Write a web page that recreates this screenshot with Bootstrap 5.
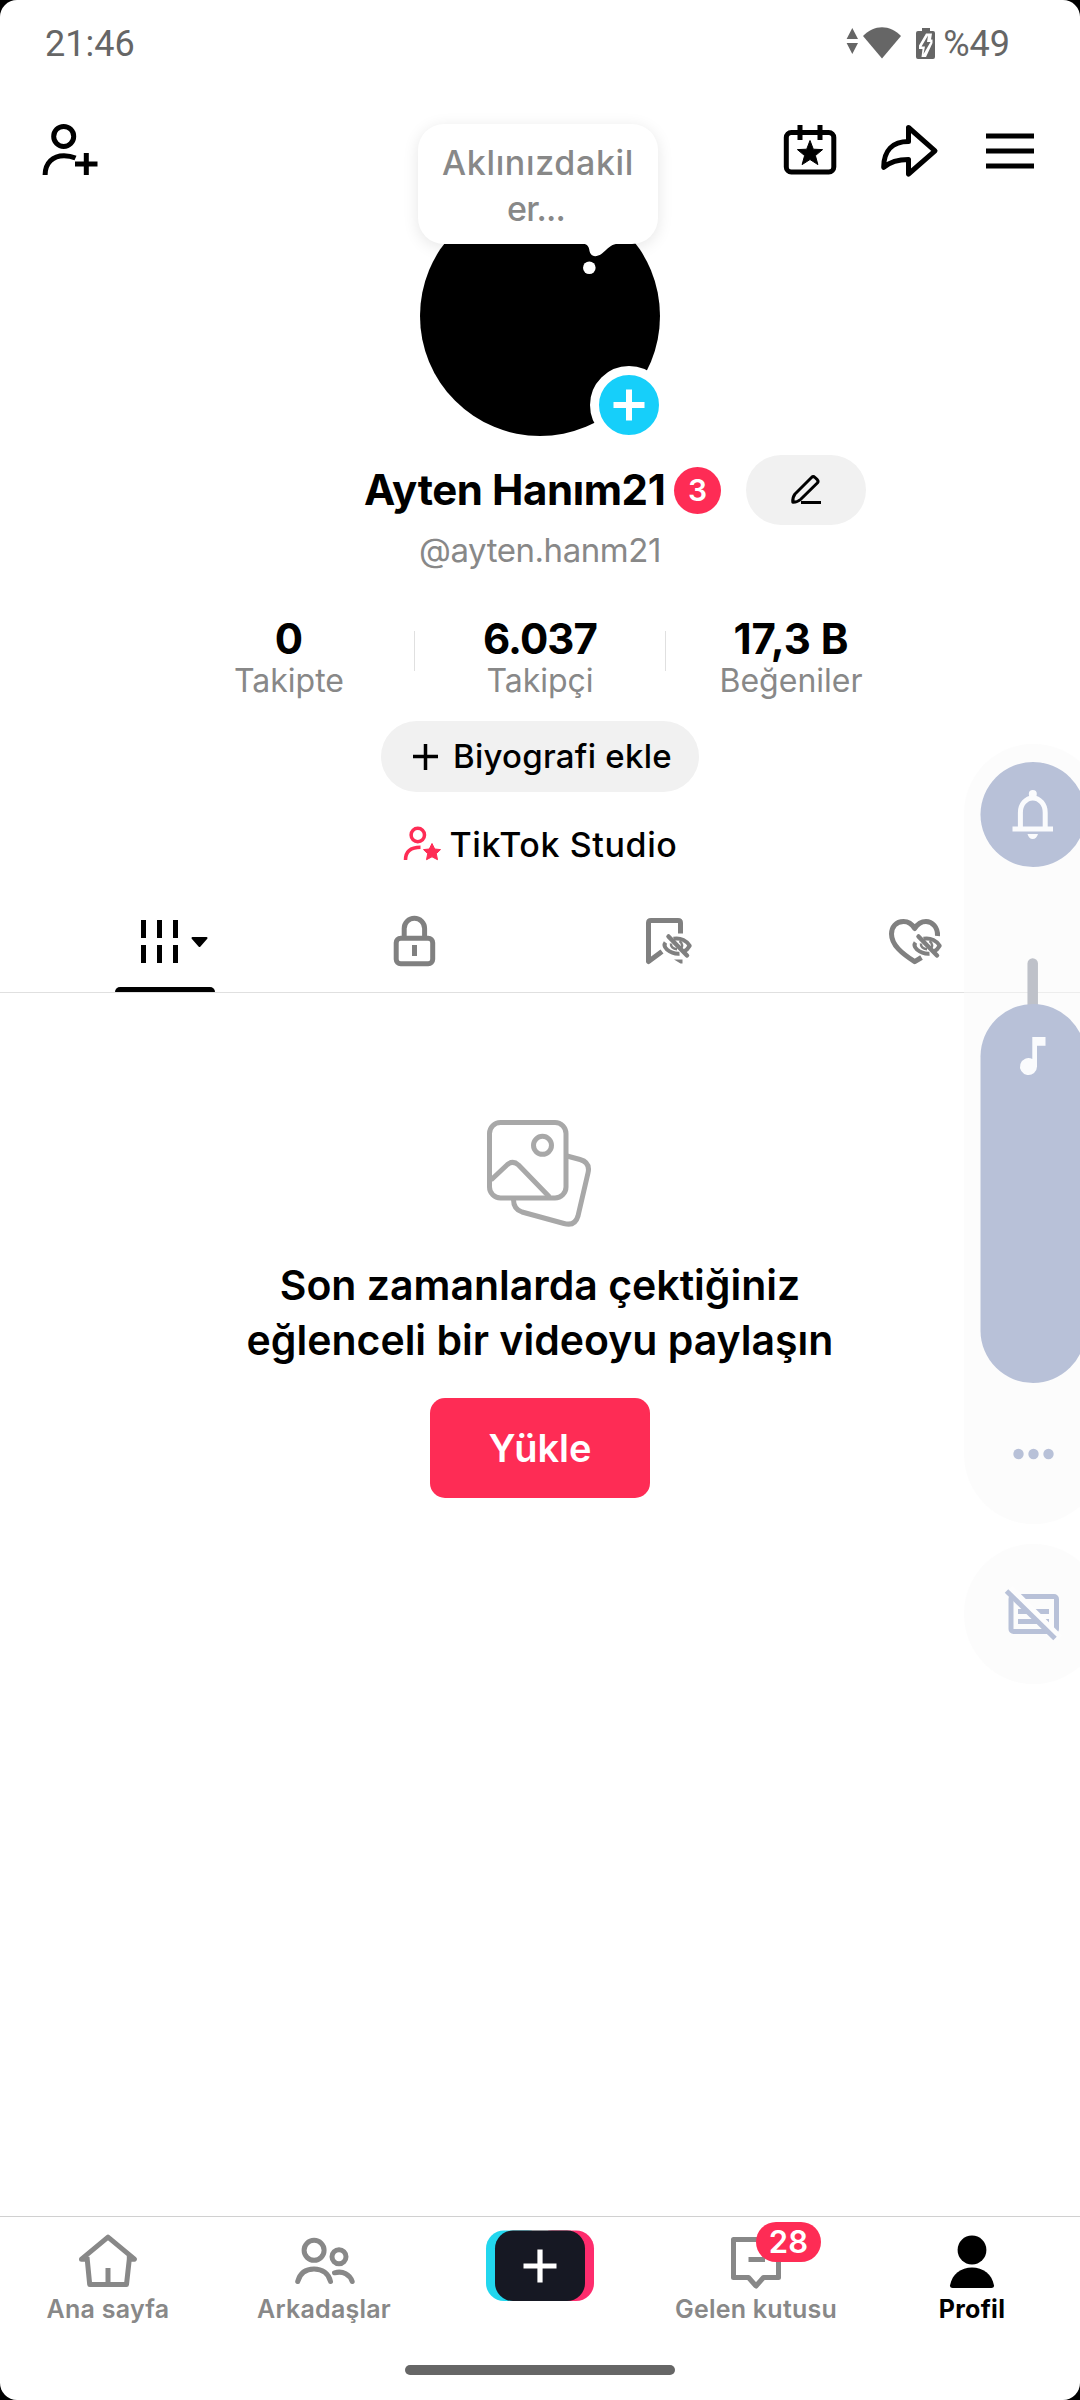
<!DOCTYPE html>
<html lang="tr">
<head>
<meta charset="utf-8">
<meta name="viewport" content="width=device-width, initial-scale=1">
<title>Profil</title>
<link href="https://cdn.jsdelivr.net/npm/bootstrap@5.3.0/dist/css/bootstrap.min.css" rel="stylesheet">
<style>
  body { background:#000; font-family:Inter,"Noto Sans",sans-serif; color:#000; overflow:hidden; }
  svg { display:block; flex:none; overflow:visible; }
  .phone { width:1080px; height:2400px; background:#fff; border-radius:17px; overflow:hidden; }
  .muted { color:#888; }
  .ln { fill:none; stroke:currentColor; stroke-width:5; stroke-linejoin:round; stroke-linecap:butt; }
  .status { height:88px; padding:1px 70px 0 45px; color:#666; font-family:Roboto,sans-serif; font-size:36px; line-height:87px; }
  .status-icons { margin-right:-3px; }
  .topbar { height:108px; padding:32px 42px 0 38px; }
  .avatar { width:240px; height:240px; background:#000; }
  .bubble { left:-2px; top:-72px; width:240px; height:120px; padding-top:16px; border-radius:26px; background:#fff; box-shadow:0 3px 16px rgba(0,0,0,.1); font-size:34px; line-height:46px; font-weight:500; letter-spacing:.65px; }
  .bubble .rest { letter-spacing:-.8px; margin-right:4px; }
  .avatar-mask { inset:0; }
  .add-badge { left:170px; top:170px; width:78px; height:78px; border:9px solid #fff; background:#16cffa; }
  .name-row { height:70px; margin-top:19px; margin-bottom:1px; padding-left:364px; }
  .name-text { font-size:42px; font-weight:700; line-height:70px; width:310px; letter-spacing:-.42px; }
  .count { width:47px; height:47px; background:#fe2c55; font-size:30px; line-height:47px; font-weight:600; }
  .edit { width:120px; height:70px; background:#f1f1f1; margin-left:25px; }
  .handle { font-size:33px; line-height:48px; letter-spacing:-.45px; }
  .stats { margin-top:40px; }
  .stat { width:250px; }
  .stat b { display:block; font-size:42px; line-height:50px; font-weight:700; }
  .stat b.tight { letter-spacing:-.95px; }
  .stat span.cap { display:block; font-size:32px; line-height:33px; }
  .sep { width:1px; height:40px; margin-top:17px; background:#e0e0e0; }
  .bio { width:318px; height:71px; margin-top:24px; background:#f1f1f1; font-size:33px; font-weight:500; padding-left:32px; gap:15px; letter-spacing:.25px; }
  .studio { height:40px; margin-top:32px; font-size:34px; font-weight:500; gap:9px; letter-spacing:.6px; }
  .tabs { height:129px; padding:46px 40px 0; border-bottom:1px solid #e0e0e0; color:#808080; }
  .tab-cell { width:250px; }
  .tab-mark { width:100px; height:5px; margin-top:17px; background:#000; border-radius:5px 5px 0 0; }
  .empty { margin-top:127px; }
  .empty-title { margin:30px 0 0; font-size:41px; line-height:55px; font-weight:600; }
  .upload { margin-top:30px; width:220px; height:100px; border-radius:15px; background:#fe2c55; color:#fff; font-size:38px; font-weight:600; line-height:98px; padding:0; border:0; }
  .dock { height:184px; border-top:1px solid #d0d0d0; }
  .dock-item { width:216px; padding-top:13px; color:#888; font-size:25px; line-height:34px; font-weight:600; letter-spacing:.25px; }
  .dock-item svg { margin-bottom:2px; }
  .inbox-count { left:108px; top:5px; width:65px; height:40px; border-radius:20px; background:#fe2c55; color:#fff; font-size:31px; line-height:40px; }
  .home-bar { width:270px; height:10px; margin:39px auto 0; border-radius:5px; background:#666; }
  .volume { top:744px; right:0; width:116px; overflow:hidden; color:#b8c1d8; }
  .vol-panel { width:139px; height:780px; border-radius:70px; background:rgba(250,250,250,.5); }
  .vol-foot { width:139px; height:140px; margin-top:20px; border-radius:70px; background:rgba(250,250,250,.5); }
</style>
</head>
<body>
<div class="phone d-flex flex-column position-relative">

  <div class="status d-flex justify-content-between">
    <span>21:46</span>
    <span class="d-flex align-items-center">
      <svg class="status-icons" width="100" height="40" viewBox="845 25 100 40" fill="currentColor">
        <path d="M851.3 28L857 39H845.6ZM845.6 43H857L851.3 54Z"/>
        <path d="M862 36C873 24.3 889 24.3 900 36L881 58.5Z"/>
        <path d="M921 28h8v3h3a2 2 0 0 1 2 2V57a2 2 0 0 1-2 2H917a2 2 0 0 1-2-2V33a2 2 0 0 1 2-2h4Z"/>
        <path d="M925 33.5L918 45.5V49H921.5L920.5 57H925L931.5 43V39.5H930L931 33.500Z" fill="#fff"/>
        <path d="M927 35.500L920.500 46.500H924L922.500 54L929.500 42H926Z"/>
      </svg>
      <span>%49</span>
    </span>
  </div>

  <div class="topbar d-flex justify-content-between">
    <svg width="64" height="60" viewBox="38 120 64 60" class="ln">
      <circle cx="63.7" cy="136.4" r="10"/>
      <path d="M45.1 175C45.100 163 53 155.700 64 155.700C68.500 155.700 72 156.500 75.500 158M75 164H97.500M86.300 153V175"/>
    </svg>
    <svg width="258" height="60" viewBox="780 120 258 60" class="ln">
      <rect x="786.3" y="132.500" width="47.500" height="39.500" rx="5"/>
      <path d="M800 125V140M820 125V140"/>
      <path fill="currentColor" stroke-width="1" style="stroke-width:1px" d="M810 140.500L813.300 149.200L822.600 149.600L815.400 155.600L817.900 164.600L810 159.500L802.100 164.600L804.600 155.600L797.400 149.600L806.700 149.200Z"/>
      <path d="M908.500 127.500L935 150.800L908.500 174V159.500C898 159.500 890 162 883.700 167.300C883.700 150 893 141.500 908.500 141.500Z"/>
      <path d="M986 136H1034M986 151H1034M986 166H1034"/>
    </svg>
  </div>

  <div class="avatar rounded-circle position-relative align-self-center">
    <div class="bubble position-absolute text-center muted"><span>Aklınızdakil</span><br><span class="rest">er...</span></div>
    <svg class="avatar-mask position-absolute" width="240" height="240" viewBox="420 196 240 240" fill="#fff">
      <path d="M583 243.500C588 244.500 589 247 589.500 251C590.500 256.500 596 258 602 253.500C608 249 609 245 618 243.500Z"/>
      <circle cx="589.300" cy="267.700" r="6.300"/>
    </svg>
    <div class="add-badge rounded-circle position-absolute">
      <svg width="60" height="60" viewBox="0 0 60 60"><path d="M14.500 30H45.500M30 14.500V45.500" stroke="#fff" stroke-width="6"/></svg>
    </div>
  </div>

  <div class="name-row d-flex align-items-center">
    <div class="name-text text-nowrap">Ayten Hanım21</div>
    <div class="count rounded-circle text-white text-center">3</div>
    <div class="edit rounded-pill d-flex align-items-center justify-content-center">
      <svg width="34" height="34" viewBox="789 474 34 34" class="ln" style="stroke-width:3px">
        <path d="M792.800 503.200C792.500 499 793 497.500 795 495L811.500 478.500Q813.200 476.800 815 478.500L817.300 480.700Q818.800 482.200 817.300 484L800.500 500.500C798 502.800 796.500 503.300 792.800 503.200ZM801 503.600H821"/>
      </svg>
    </div>
  </div>

  <div class="handle muted text-center">@ayten.hanm21</div>

  <div class="stats d-flex justify-content-center text-center">
    <div class="stat"><b>0</b><span class="cap muted">Takipte</span></div>
    <div class="sep"></div>
    <div class="stat"><b class="tight">6.037</b><span class="cap muted">Takipçi</span></div>
    <div class="sep"></div>
    <div class="stat"><b>17,3 B</b><span class="cap muted">Beğeniler</span></div>
  </div>

  <div class="bio rounded-pill d-flex align-items-center align-self-center text-nowrap">
    <svg width="25" height="26" viewBox="0 0 25 26"><path d="M0 12.500H25M12.500 0V26" stroke="#000" stroke-width="3.500"/></svg>
    <span>Biyografi ekle</span>
  </div>

  <div class="studio d-flex align-items-center justify-content-center">
    <svg width="38" height="36" viewBox="402 826 38 36" class="ln" style="color:#fe2c55;stroke-width:3.500px">
      <circle cx="416.800" cy="835" r="6.700"/>
      <path d="M404.500 860C404.500 851.500 410 847.200 419.500 847.200"/>
      <path fill="currentColor" style="stroke-width:1px" d="M431 843.500L433.700 849L439.500 849.600L435.300 853.700L436.500 859.700L431 856.800L425.500 859.700L426.700 853.700L422.500 849.600L428.300 849Z"/>
    </svg>
    <span>TikTok Studio</span>
  </div>

  <div class="tabs d-flex">
    <div class="tab-cell d-flex flex-column align-items-center text-black">
      <svg width="80" height="60" viewBox="125 910 80 60" class="ln"><path d="M143.500 920V938M159.500 920V938M175.500 920V938M143.500 945V963M159.500 945V963M175.500 945V963"/><path d="M192.500 938H206.500L199.500 946Z" fill="currentColor" style="stroke-width:2px"/></svg>
      <div class="tab-mark"></div>
    </div>
    <div class="tab-cell d-flex flex-column align-items-center">
      <svg width="80" height="60" viewBox="375 910 80 60" class="ln"><path d="M404.200 938V928.500a10.200 10.200 0 0 1 20.400 0V938M414.500 945V956"/><rect x="396.200" y="938.300" width="36.500" height="25.400" rx="4.500"/></svg>
    </div>
    <div class="tab-cell d-flex flex-column align-items-center">
      <svg width="80" height="60" viewBox="625 910 80 60" class="ln">
        <path d="M662 951.500L648.500 961.500V923Q648.500 920.500 651 920.500H678Q680.500 920.500 680.500 923V933.500"/>
        <path d="M674 959.500H682.500V963.500H680.500Z" fill="currentColor" stroke="none"/>
        <g id="hidden-eye">
          <path style="stroke-width:4px" d="M665.500 942.500C663.300 945.500 664.800 947.500 667 949.500C671 952.800 675 954 679.500 953.700M673.500 938.800C681 937.500 687 941 689.700 945.800C688 949 686.500 950.200 683.500 951.800"/>
          <path d="M671 943.500C670.500 946.500 673 949 677 949.300M679.500 941C683 943.500 682.500 947 681 948.500" style="stroke-width:2.500px"/>
          <path d="M668.500 936.500L687 955.500" stroke-linecap="round" style="stroke-width:4.500px;stroke-linecap:round"/>
        </g>
      </svg>
    </div>
    <div class="tab-cell d-flex flex-column align-items-center">
      <svg width="80" height="60" viewBox="875 910 80 60" class="ln">
        <path d="M937.500 936C938 927 932 921.500 926 921.500C921 921.500 917.500 924 914.700 928.500C912 924 908 921.500 903.500 921.500C896 921.500 891.500 927 891.500 934C891.500 945 902 953.500 914.700 961.700L921.500 957.500"/>
        <use href="#hidden-eye" x="250"/>
      </svg>
    </div>
  </div>

  <div class="empty d-flex flex-column align-items-center text-center">
    <svg width="106" height="108" viewBox="487 1120 106 108" class="ln" style="color:#a8a8a8">
      <rect x="489.500" y="1122.500" width="76.500" height="75.500" rx="11"/>
      <circle cx="542.500" cy="1145.300" r="9"/>
      <path d="M491 1180L507.500 1164.500Q513 1160 518.500 1165L549.500 1197M567 1156L580 1159.500Q590.500 1162.500 588 1173L578 1216Q575 1226.500 564 1223.500L522 1212Q513.300 1209 513.500 1199"/>
    </svg>
    <h2 class="empty-title">Son zamanlarda çektiğiniz<br>eğlenceli bir videoyu paylaşın</h2>
    <button class="upload btn">Yükle</button>
  </div>

  <div class="dock mt-auto">
    <div class="d-flex text-center">
      <div class="dock-item d-flex flex-column align-items-center">
        <svg width="80" height="60" viewBox="68 2230 80 60" class="ln"><path d="M87 2259.200H81.500L108 2237.200L134.500 2259.200H129.300L126.500 2284.500H89.700L87 2257M108 2268V2284M129.300 2259.200V2256"/></svg>
        <span>Ana sayfa</span>
      </div>
      <div class="dock-item d-flex flex-column align-items-center">
        <svg width="80" height="60" viewBox="284 2230 80 60" class="ln" style="stroke-linecap:round"><circle cx="314.100" cy="2250.300" r="10"/><circle cx="339" cy="2256.700" r="7"/><path d="M297.700 2281.500C300 2273 306 2269 314 2269C322 2269 328.500 2273 330.500 2281.500M334.500 2272.800C343 2270.500 350 2274.500 352.200 2281.500"/></svg>
        <span>Arkadaşlar</span>
      </div>
      <div class="dock-item d-flex flex-column align-items-center">
        <svg width="108" height="71" viewBox="486 2230 108 71"><rect x="486" y="2230.500" width="60" height="70.500" rx="18" fill="#22d7ee"/><rect x="534" y="2230.500" width="60" height="70.500" rx="18" fill="#fe2c6d"/><rect x="495" y="2230.500" width="90" height="70.500" rx="18" fill="#161823"/><path d="M523.500 2266H556.500M540 2249.500V2282.500" stroke="#fff" stroke-width="5.200"/></svg>
      </div>
      <div class="dock-item d-flex flex-column align-items-center position-relative">
        <svg width="80" height="60" viewBox="716 2230 80 60" class="ln"><path d="M733.500 2239.500H778.500V2277.500H763.500L756 2286L748.500 2277.500H733.500ZM748.500 2259.500H765"/></svg>
        <span class="inbox-count position-absolute">28</span>
        <span>Gelen kutusu</span>
      </div>
      <div class="dock-item d-flex flex-column align-items-center text-black fw-bold">
        <svg width="80" height="60" viewBox="932 2230 80 60"><circle cx="972" cy="2250" r="14.400"/><path d="M950 2285.500C952 2274 961 2267.500 972 2267.500S992 2274 994 2285.500Q994 2288 991.500 2288H952.500Q950 2288 950 2285.500Z"/></svg>
        <span>Profil</span>
      </div>
    </div>
    <div class="home-bar"></div>
  </div>

  <div class="volume position-absolute">
    <div class="vol-panel">
      <svg width="139" height="780" viewBox="964 744 139 780" fill="currentColor">
        <circle cx="1033" cy="814.500" r="52.500"/>
        <g fill="#fafbfd">
          <circle cx="1032.800" cy="794" r="4"/>
          <path d="M1012.500 826.500H1053V831.500H1012.500ZM1027.500 834H1038Q1036.500 839 1032.700 839T1027.500 834Z"/>
        </g>
        <path d="M1020.400 828V812.500a12.400 14.500 0 0 1 24.800 0V828" class="ln" style="stroke:#fafbfd"/>
        <path d="M1032.700 963.500V1020" stroke="#bec1c9" stroke-width="10.500" stroke-linecap="round"/>
        <rect x="980.500" y="1004" width="105" height="379" rx="52.500"/>
        <path fill="#fafbfd" d="M1032.300 1037H1045.500V1045.700H1037V1066.500A8.500 8.500 0 1 1 1032.300 1058.900Z"/>
        <circle cx="1018.500" cy="1454" r="5.200"/><circle cx="1033.500" cy="1454" r="5.200"/><circle cx="1048.500" cy="1454" r="5.200"/>
      </svg>
    </div>
    <div class="vol-foot">
      <svg width="139" height="140" viewBox="964 1544 139 140" class="ln">
        <rect x="1011" y="1596.500" width="45.500" height="35" rx="2.500"/>
        <path d="M1018 1611.500H1049M1018 1621.500H1049"/>
        <path d="M1010.500 1588L1060 1637.500" style="stroke:#fdfdfd;stroke-width:6px"/>
        <path d="M1006.500 1591L1055 1638.500"/>
      </svg>
    </div>
  </div>
</div>
<script src="https://cdn.jsdelivr.net/npm/bootstrap@5.3.0/dist/js/bootstrap.bundle.min.js"></script>
</body>
</html>
